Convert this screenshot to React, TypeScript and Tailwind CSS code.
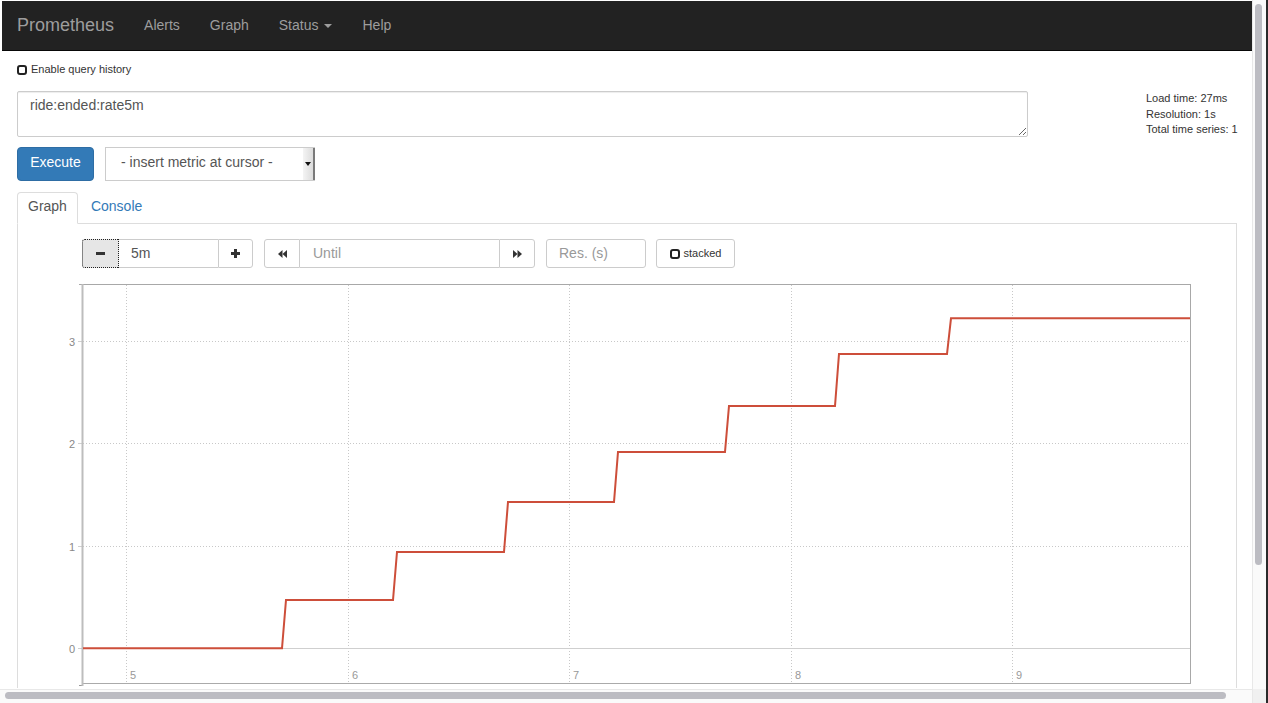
import React from "react";

const navLinks = ["Alerts", "Graph"];

const stats = ["Load time: 27ms", "Resolution: 1s", "Total time series: 1"];

// step series in page coordinates (viewBox matches page pixels)
const series: [number, number][] = [
  [83, 648.3],
  [282, 648.3],
  [286, 600],
  [393, 600],
  [397, 552],
  [504, 552],
  [508, 502],
  [614, 502],
  [618, 452],
  [725, 452],
  [729, 406],
  [835, 406],
  [839, 354],
  [947, 354],
  [951, 318.3],
  [1190, 318.3],
];

const yTicks = [
  { label: "3", y: 341.5 },
  { label: "2", y: 443.5 },
  { label: "1", y: 546.5 },
];

const xTicks = [
  { label: "5", x: 126.5 },
  { label: "6", x: 348.5 },
  { label: "7", x: 569.5 },
  { label: "8", x: 791.5 },
  { label: "9", x: 1012.5 },
];

const CheckBox: React.FC = () => (
  <span className="inline-block h-[10px] w-[10px] rounded-[3px] border-2 border-[#222]" />
);

const Chart: React.FC = () => (
  <svg
    width={1218}
    height={420}
    viewBox="18 268 1218 420"
    className="block"
    fontFamily="'Liberation Sans', Arial, sans-serif"
  >
    {/* vertical grid */}
    {xTicks.map((t) => (
      <line
        key={t.label}
        x1={t.x}
        x2={t.x}
        y1={285}
        y2={683}
        stroke="#c8c8c8"
        strokeDasharray="1 2"
      />
    ))}
    {/* horizontal grid */}
    {yTicks.map((t) => (
      <g key={t.label}>
        <line x1={78} x2={83} y1={t.y} y2={t.y} stroke="#d0d0d0" />
        <line
          x1={83}
          x2={1190}
          y1={t.y}
          y2={t.y}
          stroke="#c8c8c8"
          strokeDasharray="1 2"
        />
        <text x={75} y={t.y + 4} textAnchor="end" fontSize={11} fill="#888">
          {t.label}
        </text>
      </g>
    ))}
    <line x1={78} x2={1190} y1={648.5} y2={648.5} stroke="#cfcfcf" />
    <text x={75} y={652.5} textAnchor="end" fontSize={11} fill="#888">
      0
    </text>
    {xTicks.map((t) => (
      <text key={t.label} x={t.x + 3.5} y={679} fontSize={11} fill="#999">
        {t.label}
      </text>
    ))}
    {/* frame */}
    <line x1={79} x2={1191} y1={284.5} y2={284.5} stroke="#a8a8a8" />
    <line x1={1190.5} x2={1190.5} y1={284} y2={684} stroke="#a8a8a8" />
    <line x1={82} x2={1191} y1={683.5} y2={683.5} stroke="#aaa" />
    <line x1={79} x2={82} y1={685.5} y2={685.5} stroke="#999" />
    <line x1={82.5} x2={82.5} y1={284} y2={686} stroke="#bdbdbd" strokeWidth={2} />
    {/* series */}
    <polyline
      points={series.map((p) => p.join(",")).join(" ")}
      fill="none"
      stroke="#cd4e3a"
      strokeWidth={2}
      strokeLinejoin="miter"
    />
  </svg>
);

export default function App() {
  return (
    <div className="flex h-[703px] w-[1268px] overflow-hidden bg-white font-['Liberation_Sans',Arial,sans-serif] text-[14px] text-[#333]">
      <div className="flex w-[1252px] flex-col">
        <div className="h-[689px] overflow-hidden pl-[2px] pt-px">
          {/* navbar */}
          <nav className="flex h-[50px] items-center border-b border-[#080808] bg-[#222] pb-[2px] text-[#9d9d9d]">
            <span className="px-[15px] text-[18px] leading-[20px]">Prometheus</span>
            {navLinks.map((l) => (
              <span key={l} className="px-[15px] leading-[20px]">
                {l}
              </span>
            ))}
            <span className="flex items-center gap-[6px] px-[15px] leading-[20px]">
              Status
              <span className="mt-[2px] h-0 w-0 border-x-[4px] border-t-[4px] border-x-transparent border-t-[#9d9d9d]" />
            </span>
            <span className="px-[15px] leading-[20px]">Help</span>
          </nav>

          <div className="px-[15px]">
            <div className="mt-[11px] flex h-[15px] items-center gap-[4px] text-[11px]">
              <CheckBox />
              <span>Enable query history</span>
            </div>

            <div className="mt-[14px] flex">
              <div className="w-[1011px] shrink-0">
                <textarea
                  readOnly
                  defaultValue="ride:ended:rate5m"
                  className="block h-[46px] w-full rounded-[2px] border border-[#ccc] px-[12px] pt-[3px] leading-[20px] text-[#555] shadow-[inset_0_1px_1px_rgba(0,0,0,0.075)] outline-none"
                />
                <div className="mt-[10px] flex">
                  <button className="h-[34px] w-[77px] rounded-[4px] border border-[#2e6da4] bg-[#337ab7] pb-[4px] text-white">
                    Execute
                  </button>
                  <div className="ml-[11px] flex h-[34px] w-[210px] items-center border border-[#ccc] border-r-0 bg-white text-[#555]">
                    <span className="flex-1 pb-[4px] pl-[15px]">- insert metric at cursor -</span>
                    <span className="flex h-full w-[12px] items-center justify-center border-r-2 border-[#7a7a7a] bg-gradient-to-r from-[#f4f4f4] to-[#dcdcdc]">
                      <span className="h-0 w-0 border-x-[3px] border-t-[4px] border-x-transparent border-t-[#111]" />
                    </span>
                  </div>
                </div>
              </div>
              <div className="ml-[118px] shrink-0 whitespace-nowrap text-[11px] leading-[15.5px]">
                {stats.map((s) => (
                  <div key={s}>{s}</div>
                ))}
              </div>
            </div>

            {/* tabs */}
            <div className="mt-[11px] flex h-[32px] border-b border-[#ddd]">
              <span className="-mb-px rounded-t-[4px] border border-[#ddd] border-b-white bg-white px-[10px] pb-[7px] pt-[3px] leading-[20px] text-[#555]">
                Graph
              </span>
              <span className="ml-[2px] border border-transparent px-[10px] pb-[7px] pt-[3px] leading-[20px] text-[#337ab7]">
                Console
              </span>
            </div>

            <div className="border-x border-[#ddd]">
              <div className="flex h-[44px] items-start pl-[64px] pt-[15px]">
                <div className="flex h-[29px]">
                  <span className="flex w-[37px] items-center justify-center rounded-l-[3px] border border-dotted border-[#222] bg-[#e6e6e6]">
                    <span className="h-[3px] w-[9px] bg-[#333]" />
                  </span>
                  <span className="flex w-[99px] items-center border-y border-[#ccc] pl-[12px] text-[#555]">
                    5m
                  </span>
                  <span className="relative flex w-[35px] items-center justify-center rounded-r-[3px] border border-[#ccc]">
                    <span className="h-[3px] w-[9px] bg-[#333]" />
                    <span className="absolute h-[9px] w-[3px] bg-[#333]" />
                  </span>
                </div>
                <div className="ml-[11px] flex h-[29px]">
                  <span className="flex w-[36px] items-center justify-center rounded-l-[3px] border border-[#ccc]">
                    <svg width="9" height="8" viewBox="0 0 9 8">
                      <polygon points="4.5,0 4.5,8 0,4" fill="#333" />
                      <polygon points="9,0 9,8 4.5,4" fill="#333" />
                    </svg>
                  </span>
                  <span className="flex w-[199px] items-center border-y border-[#ccc] pl-[13px] text-[#999]">
                    Until
                  </span>
                  <span className="flex w-[36px] items-center justify-center rounded-r-[3px] border border-[#ccc]">
                    <svg width="9" height="8" viewBox="0 0 9 8">
                      <polygon points="0,0 0,8 4.5,4" fill="#333" />
                      <polygon points="4.5,0 4.5,8 9,4" fill="#333" />
                    </svg>
                  </span>
                </div>
                <span className="ml-[11px] flex h-[29px] w-[100px] items-center rounded-[3px] border border-[#ccc] pl-[12px] text-[#999]">
                  Res. (s)
                </span>
                <span className="ml-[10px] flex h-[29px] w-[79px] items-center justify-center gap-[4px] rounded-[3px] border border-[#ccc] text-[11px]">
                  <CheckBox />
                  stacked
                </span>
              </div>
              <Chart />
            </div>
          </div>
        </div>
        {/* horizontal scrollbar */}
        <div className="h-[14px] border-t border-[#e8e8e8] bg-[#fafafa] pl-[5px] pt-[2px]">
          <div className="h-[7px] w-[1221px] rounded-full bg-[#bcbcc2]" />
        </div>
      </div>
      {/* vertical scrollbar */}
      <div className="flex w-[14px] flex-col border-l border-[#e8e8e8] bg-[#fafafa]">
        <div className="h-[689px] pl-[2px] pt-[4px]">
          <div className="h-[561px] w-[7px] rounded-full bg-[#bcbcc2]" />
        </div>
        <div className="h-[14px] bg-[#f0f0f0]" />
      </div>
      <div className="w-[2px] bg-[#2a2a2a]" />
    </div>
  );
}
